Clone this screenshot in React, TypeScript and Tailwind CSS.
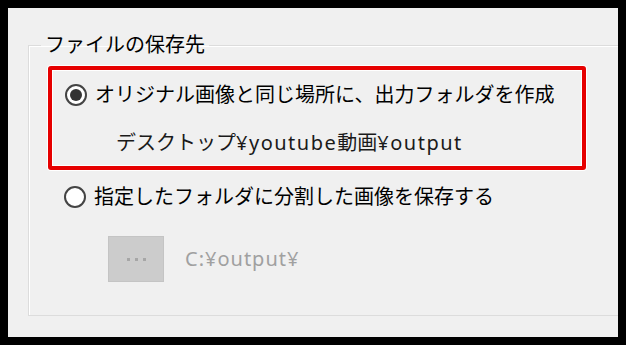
import React from 'react'

const latin = "font-['Noto_Sans',sans-serif]"

function Radio({ checked }: { checked?: boolean }) {
  return (
    <span className="w-[22px] h-[22px] shrink-0 rounded-full border-2 border-[#444] bg-white flex items-center justify-center">
      {checked && <span className="w-[12px] h-[12px] rounded-full bg-[#333]" />}
    </span>
  )
}

export default function App() {
  return (
    <div className="w-[626px] h-[345px] bg-black pt-2 pl-2 font-['Noto_Sans','Noto_Sans_CJK_JP',sans-serif] text-[20px] text-black">
      <div className="w-[610px] h-[329px] bg-[#f0f0f0] overflow-hidden pl-5 pt-[25px]">
        <fieldset className="w-[620px] h-[283px] border border-r-0 border-[#dcdcdc] shadow-[inset_1px_1px_0_#fff]">
          <legend className="ml-3 px-1 leading-[24px]">ファイルの保存先</legend>

          {/* selected option, highlighted */}
          <div className="ml-[19px] mt-[9px] w-[538px] h-[104px] rounded-[3px] border-4 border-[#e60000] ring-1 ring-white shadow-[inset_0_0_0_1px_#fff] pt-[10px]">
            <div className="flex items-center gap-2 h-[30px] pl-[13px] whitespace-nowrap">
              <Radio checked />
              <span className="leading-[30px]">オリジナル画像と同じ場所に、出力フォルダを作成</span>
            </div>
            <div className="mt-[18px] h-[30px] leading-[30px] pl-[64px] whitespace-nowrap text-[#1a1a1a]">
              デスクトップ<span className={`${latin} tracking-[1.5px]`}>¥youtube</span>動画<span className={`${latin} tracking-[1.5px]`}>¥output</span>
            </div>
          </div>

          <div className="mt-[12px] ml-[35px] flex items-center gap-2 h-[30px] whitespace-nowrap">
            <Radio />
            <span className="leading-[30px]">指定したフォルダに分割した画像を保存する</span>
          </div>

          <div className="mt-[24px] ml-[79px] flex items-center gap-[21px]">
            <div className="w-[56px] h-[46px] bg-[#cccccc] border border-[#c4c4c4] flex items-center justify-center gap-[5px]">
              <span className="w-[3px] h-[3px] bg-[#a6a6a6]" />
              <span className="w-[3px] h-[3px] bg-[#a6a6a6]" />
              <span className="w-[3px] h-[3px] bg-[#a6a6a6]" />
            </div>
            <span className={`${latin} text-[#a0a0a0] tracking-[1px] leading-[30px]`}>C:¥output¥</span>
          </div>
        </fieldset>
      </div>
    </div>
  )
}
